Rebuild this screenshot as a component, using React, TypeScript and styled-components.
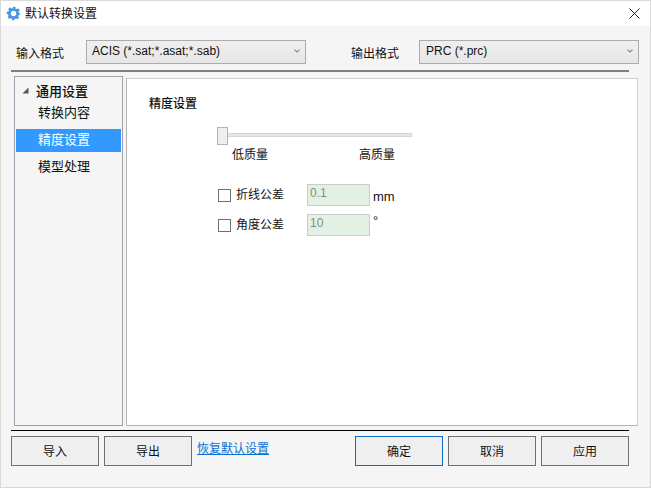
import React from "react";
import styled, { createGlobalStyle } from "styled-components";

const Global = createGlobalStyle`
  html, body { margin: 0; padding: 0; background: #f5f5f5; }
  * { box-sizing: border-box; }
`;

const FONT = `"Liberation Sans", "Noto Sans CJK SC", sans-serif`;

const Window = styled.div`
  width: 651px;
  height: 488px;
  background: #f5f5f5;
  border: 1px solid #d9d9d9;
  font-family: ${FONT};
  font-size: 12px;
  color: #111;
  display: flex;
  flex-direction: column;
  overflow: hidden;
`;

const TitleBar = styled.div`
  height: 25px;
  background: #fff;
  display: flex;
  align-items: center;
  padding-left: 5px;
  flex: none;
`;

const TitleText = styled.span`
  margin-left: 4px;
  font-size: 12px;
  line-height: 16px;
`;

const CloseBtn = styled.svg`
  margin-left: auto;
  margin-right: 10px;
  width: 11px;
  height: 11px;
`;

const FormatRow = styled.div`
  display: flex;
  align-items: center;
  height: 24px;
  margin-top: 14px;
  padding-left: 15px;
  flex: none;
`;

const FormatLabel = styled.span<{ $w: number }>`
  width: ${(p) => p.$w}px;
  padding-top: 1px;
  flex: none;
`;

const Combo = styled.div<{ $pad: number }>`
  width: 220px;
  height: 24px;
  background: linear-gradient(#efefef, #e6e6e6);
  border: 1px solid #acacac;
  display: flex;
  align-items: center;
  justify-content: space-between;
  padding: 0 5px 2px ${(p) => p.$pad}px;
  font-size: 12px;
  flex: none;
`;

const Spacer = styled.div<{ $w: number }>`
  width: ${(p) => p.$w}px;
  flex: none;
`;

const Rule = styled.div<{ $h: number; $c: string; $top: number }>`
  width: 618px;
  height: ${(p) => p.$h}px;
  background: ${(p) => p.$c};
  margin: ${(p) => p.$top}px 0 0 10px;
  flex: none;
`;

const Main = styled.div`
  display: flex;
  align-items: flex-end;
  height: 350px;
  margin: 4px 0 0 13px;
  flex: none;
`;

const Sidebar = styled.div`
  width: 109px;
  height: 350px;
  background: #f5f5f5;
  border: 1px solid #a0a0ac;
  padding: 2px 1px 2px 1px;
  flex: none;
`;

const TreeHead = styled.div`
  display: flex;
  align-items: center;
  height: 23px;
  padding: 0 0 1px 6px;
  font-size: 13px;
  font-weight: 500;
  gap: 7px;
`;

const TreeItem = styled.div<{ $active?: boolean }>`
  height: 23px;
  width: 105px;
  margin-bottom: 4px;
  padding-left: 22px;
  line-height: 21px;
  font-size: 13px;
  background: ${(p) => (p.$active ? "#3399ff" : "transparent")};
  color: ${(p) => (p.$active ? "#fff" : "#111")};
`;

const Panel = styled.div`
  width: 512px;
  height: 348px;
  margin-left: 3px;
  background: #fff;
  border: 1px solid #b4b4b4;
  border-top-color: #d0d0d0;
  border-right-color: #d0d0d0;
  padding: 17px 0 0 22px;
  flex: none;
`;

const SectionTitle = styled.div`
  font-size: 12px;
  font-weight: 500;
  line-height: 17px;
`;

const SliderBlock = styled.div`
  width: 195px;
  margin: 14px 0 0 68px;
`;

const SliderTrack = styled.div`
  height: 16px;
  display: flex;
  align-items: center;
  position: relative;
`;

const TrackLine = styled.div`
  width: 100%;
  height: 4px;
  margin-left: 1px;
  background: #e6e7e6;
  border: 1px solid #d6d6d6;
`;

const Thumb = styled.div`
  position: absolute;
  left: 0;
  top: 0;
  width: 11px;
  height: 18px;
  background: #efefef;
  border: 1px solid #b4b4b4;
`;

const SliderLabels = styled.div`
  display: flex;
  justify-content: space-between;
  padding: 0 17px 0 15px;
  margin-top: 4px;
  line-height: 17px;
`;

const OptionList = styled.div`
  margin: 20px 0 0 69px;
  display: flex;
  flex-direction: column;
  gap: 8px;
`;

const OptionRow = styled.div`
  display: flex;
  align-items: center;
  height: 22px;
`;

const CheckBox = styled.div`
  width: 13px;
  height: 13px;
  background: #fff;
  border: 1px solid #707070;
  flex: none;
`;

const OptionLabel = styled.span`
  margin-left: 5px;
  width: 71px;
  padding-bottom: 4px;
  flex: none;
`;

const ValueBox = styled.div`
  width: 63px;
  height: 22px;
  background: #e2f1e3;
  border: 1px solid #cccccc;
  color: #7f8f84;
  padding-left: 2px;
  line-height: 17px;
  flex: none;
`;

const Unit = styled.span<{ $up?: boolean }>`
  margin: 0 0 ${(p) => (p.$up ? 0 : 2)}px 3px;
  font-size: 13px;
  align-self: ${(p) => (p.$up ? "flex-start" : "flex-end")};
  line-height: 14px;
`;

const ButtonRow = styled.div`
  display: flex;
  align-items: flex-start;
  margin: 5px 0 0 10px;
  flex: none;
`;

const Btn = styled.button<{ $primary?: boolean; $gap?: number }>`
  width: 88px;
  height: 30px;
  background: #efefef;
  border: 1px solid ${(p) => (p.$primary ? "#0f6cc4" : "#707070")};
  margin-left: ${(p) => p.$gap ?? 5}px;
  font-family: ${FONT};
  font-size: 12px;
  color: #111;
  padding: 0 0 2px;
  flex: none;
`;

const LinkText = styled.a`
  margin: 5px 0 0 5px;
  width: 153px;
  color: #0a6fd0;
  text-decoration: underline;
  line-height: 17px;
  flex: none;
`;

const Gear = () => (
  <svg width="15" height="15" viewBox="0 0 16 16">
    <circle cx="8" cy="8" r="4.4" fill="none" stroke="#4a94e0" strokeWidth="3" />
    <circle
      cx="8"
      cy="8"
      r="6.2"
      fill="none"
      stroke="#4a94e0"
      strokeWidth="2.2"
      strokeDasharray="2.6 2.27"
      strokeDashoffset="1.3"
    />
  </svg>
);

const Chevron = () => (
  <svg width="6" height="4" viewBox="0 0 6 4">
    <path d="M.5.7L3 3.1 5.5.7" fill="none" stroke="#808080" strokeWidth="1.1" />
  </svg>
);

const Arrow = () => (
  <svg width="7" height="7" viewBox="0 0 7 7">
    <path d="M6.5.5v6h-6z" fill="#555" />
  </svg>
);

export default function App() {
  return (
    <Window>
      <Global />
      <TitleBar>
        <Gear />
        <TitleText>默认转换设置</TitleText>
        <CloseBtn viewBox="0 0 11 11">
          <path d="M.5.5l10 10M10.5.5l-10 10" stroke="#222" strokeWidth="1" fill="none" />
        </CloseBtn>
      </TitleBar>
      <FormatRow>
        <FormatLabel $w={70}>输入格式</FormatLabel>
        <Combo $pad={5}>
          ACIS (*.sat;*.asat;*.sab)
          <Chevron />
        </Combo>
        <Spacer $w={45} />
        <FormatLabel $w={68}>输出格式</FormatLabel>
        <Combo $pad={6}>
          PRC (*.prc)
          <Chevron />
        </Combo>
      </FormatRow>
      <Rule $h={2} $c="#808080" $top={6} />
      <Main>
        <Sidebar>
          <TreeHead>
            <Arrow />
            通用设置
          </TreeHead>
          <TreeItem>转换内容</TreeItem>
          <TreeItem $active>精度设置</TreeItem>
          <TreeItem>模型处理</TreeItem>
        </Sidebar>
        <Panel>
          <SectionTitle>精度设置</SectionTitle>
          <SliderBlock>
            <SliderTrack>
              <TrackLine />
              <Thumb />
            </SliderTrack>
            <SliderLabels>
              <span>低质量</span>
              <span>高质量</span>
            </SliderLabels>
          </SliderBlock>
          <OptionList>
            <OptionRow>
              <CheckBox />
              <OptionLabel>折线公差</OptionLabel>
              <ValueBox>0.1</ValueBox>
              <Unit>mm</Unit>
            </OptionRow>
            <OptionRow>
              <CheckBox />
              <OptionLabel>角度公差</OptionLabel>
              <ValueBox>10</ValueBox>
              <Unit $up>°</Unit>
            </OptionRow>
          </OptionList>
        </Panel>
      </Main>
      <Rule $h={1} $c="#000" $top={4} />
      <ButtonRow>
        <Btn $gap={0}>导入</Btn>
        <Btn>导出</Btn>
        <LinkText>恢复默认设置</LinkText>
        <Btn $primary>确定</Btn>
        <Btn>取消</Btn>
        <Btn>应用</Btn>
      </ButtonRow>
    </Window>
  );
}
